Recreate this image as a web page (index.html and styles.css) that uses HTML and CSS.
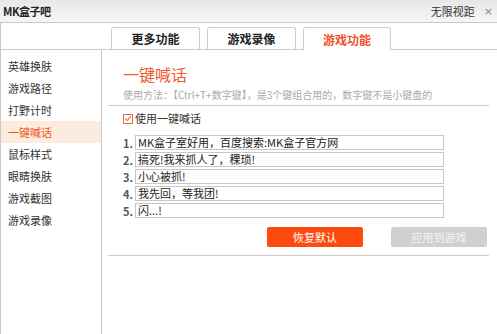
FILE: index.html
```html
<!DOCTYPE html>
<html lang="zh">
<head>
<meta charset="utf-8">
<title>MK盒子吧</title>
<link rel="stylesheet" href="styles.css">
</head>
<body>
<div class="window">
  <div class="titlebar">
    <span class="app-name">MK盒子吧</span>
    <span class="title-right">无限视距<span class="close">×</span></span>
  </div>
  <div class="tabbar">
    <div class="tab">更多功能</div>
    <div class="tab">游戏录像</div>
    <div class="tab active">游戏功能</div>
  </div>
  <div class="body">
    <ul class="sidebar">
      <li>英雄换肤</li>
      <li>游戏路径</li>
      <li>打野计时</li>
      <li class="active">一键喊话</li>
      <li>鼠标样式</li>
      <li>眼睛换肤</li>
      <li>游戏截图</li>
      <li>游戏录像</li>
    </ul>
    <div class="main">
      <div class="header">
        <h1>一键喊话</h1>
        <p class="hint">使用方法：【Ctrl+T+数字键】，是3个键组合用的，数字键不是小键盘的</p>
      </div>
      <div class="content">
        <label class="check"><span class="box"><svg width="9" height="9" viewBox="0 0 9 9"><path d="M1.5 4.5 L3.7 6.8 L7.8 1.8" fill="none" stroke="#ee5a2a" stroke-width="1.2"/></svg></span>使用一键喊话</label>
        <div class="rows">
          <div class="row"><span class="num">1.</span><span class="field">MK盒子室好用，百度搜索:MK盒子官方网</span></div>
          <div class="row"><span class="num">2.</span><span class="field">搞死!我来抓人了，稞琐!</span></div>
          <div class="row"><span class="num">3.</span><span class="field">小心被抓!</span></div>
          <div class="row"><span class="num">4.</span><span class="field">我先回，等我团!</span></div>
          <div class="row"><span class="num">5.</span><span class="field">闪...!</span></div>
        </div>
        <div class="buttons">
          <button class="btn primary">恢复默认</button>
          <button class="btn disabled">应用到游戏</button>
        </div>
      </div>
    </div>
  </div>
</div>
</body>
</html>
```
FILE: styles.css
```css
* { box-sizing: border-box; }
html, body { margin: 0; padding: 0; }
body {
  width: 497px;
  height: 334px;
  overflow: hidden;
  background: #fff;
  font-family: "Noto Sans CJK SC", "Microsoft YaHei", sans-serif;
  color: #333;
}
.window {
  width: 497px;
  height: 334px;
  display: flex;
  flex-direction: column;
}
.titlebar {
  height: 23px;
  flex: none;
  display: flex;
  align-items: center;
  justify-content: space-between;
  padding: 0 4px 0 3px;
  background: linear-gradient(#e7e7e7, #f6f6f6);
  border-bottom: 1px solid #c8c8c8;
}
.app-name {
  font-size: 11px;
  font-weight: bold;
  color: #222;
  letter-spacing: -0.5px;
}
.title-right {
  font-size: 11px;
  color: #333;
  display: flex;
  align-items: center;
}
.close {
  display: inline-block;
  color: #888;
  margin-left: 9px;
  font-size: 11px;
  font-family: "DejaVu Sans", sans-serif;
  line-height: 11px;
}
.tabbar {
  height: 27px;
  flex: none;
  display: flex;
  align-items: flex-end;
  gap: 7px;
  padding-left: 110px;
  border-left: 1px solid #c8c8c8;
  border-bottom: 1px solid #c8c8c8;
}
.tab {
  width: 89px;
  height: 22px;
  border: 1px solid #cfcfcf;
  border-bottom: none;
  border-radius: 3px 3px 0 0;
  font-size: 12px;
  font-weight: bold;
  color: #222;
  display: flex;
  align-items: center;
  justify-content: center;
  background: #fff;
}
.tab.active {
  color: #f0502a;
  height: 23px;
  margin-bottom: -1px;
  width: 88px;
}
.body {
  flex: 1;
  display: flex;
  border-left: 1px solid #c8c8c8;
}
.sidebar {
  list-style: none;
  margin: 0;
  padding: 5px 0 0;
  width: 101px;
  flex: none;
  border-right: 1px solid #c8c8c8;
}
.sidebar li {
  height: 22px;
  line-height: 22px;
  padding-left: 7px;
  font-size: 11px;
  color: #333;
}
.sidebar li.active {
  background: #fcebdf;
  color: #f0582a;
}
.main {
  flex: 1;
  padding: 14px 8px 0 6px;
}
.header {
  padding-left: 15px;
  border-bottom: 1px solid #cccccc;
  padding-bottom: 3px;
}
h1 {
  margin: 0;
  font-size: 16px;
  line-height: 20px;
  font-weight: normal;
  color: #f0582a;
}
.hint {
  margin: 4px 0 0;
  font-size: 10px;
  line-height: 14px;
  color: #aaa;
  white-space: nowrap;
}
.content {
  padding: 7px 0 8px 15px;
  border-bottom: 1px solid #cccccc;
}
.check {
  display: flex;
  align-items: center;
  font-size: 11px;
  line-height: 11px;
  height: 11px;
  color: #333;
}
.box {
  width: 10px;
  height: 10px;
  border: 1px solid #ef6a40;
  display: flex;
  align-items: center;
  justify-content: center;
  margin-right: 2px;
}
.rows {
  margin-top: 11px;
  display: flex;
  flex-direction: column;
  gap: 2px;
}
.row {
  display: flex;
  align-items: center;
  height: 15px;
}
.num {
  width: 12px;
  font-size: 11px;
  font-weight: bold;
  color: #555;
}
.field {
  width: 309px;
  height: 15px;
  border: 1px solid #c6c6c6;
  font-size: 11px;
  line-height: 13px;
  padding-left: 2px;
  color: #222;
  white-space: nowrap;
  overflow: hidden;
}
.buttons {
  display: flex;
  gap: 28px;
  margin-top: 9px;
  padding-left: 144px;
}
.btn {
  width: 96px;
  height: 20px;
  border: none;
  border-radius: 2px;
  font-family: inherit;
  font-size: 11px;
  color: #fff;
  padding: 0;
}
.btn.primary { background: #fd4a0f; }
.btn.disabled { background: #d0d0d0; color: #f4f4f4; }
```
